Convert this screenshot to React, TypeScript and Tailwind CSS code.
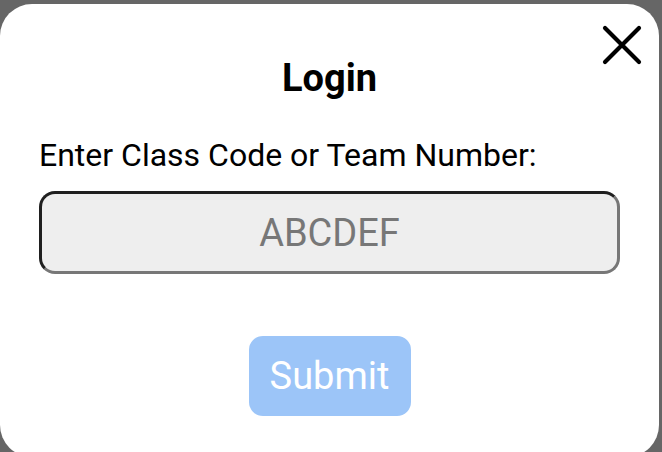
export default function App() {
  return (
    <div className="h-[452px] w-[662px] overflow-hidden bg-[#666666] pt-[4px] pr-[3px] font-['Roboto',sans-serif]">
      <div className="relative h-[453px] rounded-[32px] bg-white px-[39px] pt-[52px]">
        <button className="absolute right-[17px] top-[21px] text-black">
          <svg width="40" height="40" viewBox="0 0 40 40" fill="none" stroke="currentColor" strokeWidth="4.2" strokeLinecap="round">
            <path d="M3 3 L37 37 M37 3 L3 37" />
          </svg>
        </button>
        <h1 className="text-center text-[38px] font-bold leading-[44px] text-black">Login</h1>
        <label className="mt-[36px] block text-[32px] leading-[38px] text-black">
          Enter Class Code or Team Number:
        </label>
        <input
          type="text"
          placeholder="ABCDEF"
          className="mt-[17px] block h-[83px] w-full rounded-[16px] border-[3px] border-t-[#1f1f1f] border-l-[#1f1f1f] border-r-[#777777] border-b-[#777777] bg-[#eeeeee] text-center text-[38px] text-black outline-none placeholder:text-[#777777]"
        />
        <div className="mt-[62px] flex justify-center">
          <button className="h-[80px] w-[162px] rounded-[14px] bg-[#9cc5f8] text-[38px] text-white">
            Submit
          </button>
        </div>
      </div>
    </div>
  );
}
